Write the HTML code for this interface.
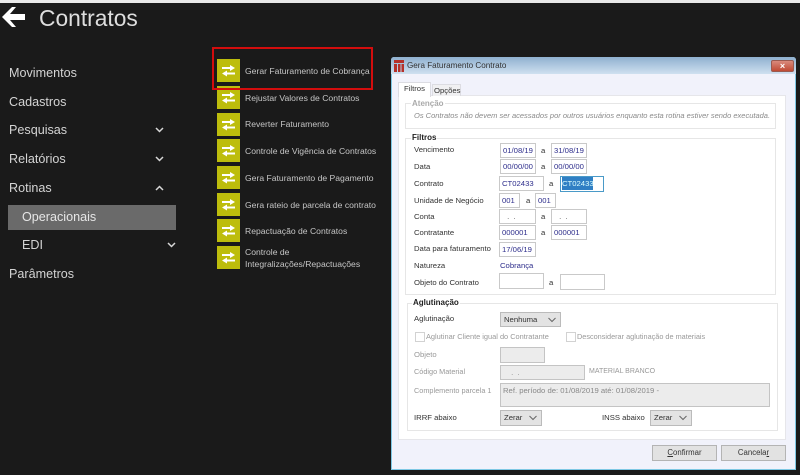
<!DOCTYPE html>
<html lang="pt">
<head>
<meta charset="utf-8">
<title>Contratos</title>
<style>
html,body{margin:0;padding:0;background:#1a1a1a}
#p{position:relative;width:800px;height:475px;overflow:hidden;background:#1a1a1a;font-family:"Liberation Sans",sans-serif}
#w{position:absolute;left:0;top:0;width:800px;height:475px;filter:blur(.35px)}
.t{position:absolute;white-space:nowrap;line-height:12px}
.n{color:#d4d4d4;font-size:12.6px;line-height:16px}
.m{color:#c6c6c6;font-size:8.6px;left:245px}
.i{position:absolute;left:217px;width:23px;height:23px;background:#bdbd0c}
.i svg{display:block}
.d{font-size:7.7px;color:#333}
.g{color:#999}
.v{color:#2e2e8c}
.f{position:absolute;box-sizing:border-box;background:#fff;border:1px solid #c9c9c9;color:#2e2e8c;font-size:7.7px;line-height:13px;padding-left:2px;white-space:nowrap;overflow:hidden}
.x{background:#ececec;color:#888;border-color:#c4c4c4}
.s{background:#e3e3e3;border-color:#bbb;color:#333;padding-left:3px}
.s svg{position:absolute;right:4px;top:4px}
.b{position:absolute;box-sizing:border-box;border:1px solid #b4b4b4;background:#e2e2e2;color:#333;font-size:7.8px;line-height:13px;text-align:center;top:445px;height:16px;width:65px}
.gb{position:absolute;box-sizing:border-box;border:1px solid #e6e6e6;background:#fff}
.lg{position:absolute;background:#fff;font-size:8px;font-weight:bold;line-height:10px;padding:0 1px;color:#222}
.c{position:absolute;box-sizing:border-box;width:10px;height:10px;border:1px solid #d2d2d2;background:#fff}
</style>
</head>
<body>
<div id="p"><div id="w">
<div style="position:absolute;left:0;top:0;width:800px;height:3px;background:#e9e9e9"></div>

<svg style="position:absolute;left:0;top:4px" width="28" height="24" viewBox="0 0 28 24"><path d="M2 13 L12 3 L16 3 L10 10 L25 10 L25 16 L10 16 L16 23 L12 23 Z" fill="#fff"/></svg>
<span class="t" style="left:39px;top:4px;font-size:22.8px;line-height:28px;color:#dedede">Contratos</span>

<span class="t n" style="left:9px;top:65px">Movimentos</span>
<span class="t n" style="left:9px;top:94px">Cadastros</span>
<span class="t n" style="left:9px;top:122px">Pesquisas</span>
<span class="t n" style="left:9px;top:151px">Relatórios</span>
<span class="t n" style="left:9px;top:180px">Rotinas</span>
<div style="position:absolute;left:8px;top:205px;width:168px;height:25px;background:#6a6a6a"></div>
<span class="t n" style="left:22px;top:209px;color:#e6e6e6">Operacionais</span>
<span class="t n" style="left:22px;top:237px">EDI</span>
<span class="t n" style="left:9px;top:266px">Parâmetros</span>

<svg style="position:absolute;left:155px;top:127px" width="9" height="6"><path d="M1 1 L4.500 4.500 L8 1" fill="none" stroke="#d8d8d8" stroke-width="1.500"/></svg>
<svg style="position:absolute;left:155px;top:156px" width="9" height="6"><path d="M1 1 L4.500 4.500 L8 1" fill="none" stroke="#d8d8d8" stroke-width="1.500"/></svg>
<svg style="position:absolute;left:155px;top:185px" width="9" height="6"><path d="M1 5 L4.500 1.500 L8 5" fill="none" stroke="#d8d8d8" stroke-width="1.500"/></svg>
<svg style="position:absolute;left:167px;top:242px" width="9" height="6"><path d="M1 1 L4.500 4.500 L8 1" fill="none" stroke="#d8d8d8" stroke-width="1.500"/></svg>

<div class="i" style="top:59px"><svg width="23" height="23"><path d="M5 8H13V6L18 9 13 12V10H5ZM18 13.500H10V11.500L5 14.500 10 17.500V15.500H18Z" fill="#fff"/></svg></div>
<div class="i" style="top:86px"><svg width="23" height="23"><path d="M5 8H13V6L18 9 13 12V10H5ZM18 13.500H10V11.500L5 14.500 10 17.500V15.500H18Z" fill="#fff"/></svg></div>
<div class="i" style="top:113px"><svg width="23" height="23"><path d="M5 8H13V6L18 9 13 12V10H5ZM18 13.500H10V11.500L5 14.500 10 17.500V15.500H18Z" fill="#fff"/></svg></div>
<div class="i" style="top:139px"><svg width="23" height="23"><path d="M5 8H13V6L18 9 13 12V10H5ZM18 13.500H10V11.500L5 14.500 10 17.500V15.500H18Z" fill="#fff"/></svg></div>
<div class="i" style="top:166px"><svg width="23" height="23"><path d="M5 8H13V6L18 9 13 12V10H5ZM18 13.500H10V11.500L5 14.500 10 17.500V15.500H18Z" fill="#fff"/></svg></div>
<div class="i" style="top:193px"><svg width="23" height="23"><path d="M5 8H13V6L18 9 13 12V10H5ZM18 13.500H10V11.500L5 14.500 10 17.500V15.500H18Z" fill="#fff"/></svg></div>
<div class="i" style="top:219px"><svg width="23" height="23"><path d="M5 8H13V6L18 9 13 12V10H5ZM18 13.500H10V11.500L5 14.500 10 17.500V15.500H18Z" fill="#fff"/></svg></div>
<div class="i" style="top:246px"><svg width="23" height="23"><path d="M5 8H13V6L18 9 13 12V10H5ZM18 13.500H10V11.500L5 14.500 10 17.500V15.500H18Z" fill="#fff"/></svg></div>

<span class="t m" style="top:65px">Gerar Faturamento de Cobrança</span>
<span class="t m" style="top:92px">Rejustar Valores de Contratos</span>
<span class="t m" style="top:118px">Reverter Faturamento</span>
<span class="t m" style="top:145px">Controle de Vigência de Contratos</span>
<span class="t m" style="top:172px">Gera Faturamento de Pagamento</span>
<span class="t m" style="top:199px">Gera rateio de parcela de contrato</span>
<span class="t m" style="top:225px">Repactuação de Contratos</span>
<span class="t m" style="top:246px">Controle de</span>
<span class="t m" style="top:258px">Integralizações/Repactuações</span>

<div style="position:absolute;left:212px;top:47px;width:161px;height:43px;box-sizing:border-box;border:2px solid #d30d0d"></div>

<!-- dialog -->
<div style="position:absolute;left:391px;top:57px;width:405px;height:413px;box-sizing:border-box;background:#f1f2fb;border:1px solid #7ec8e4;border-top:none;border-radius:3px 3px 0 0"></div>
<div style="position:absolute;left:391px;top:57px;width:405px;height:17px;background:linear-gradient(#8fb0cf,#cfe0f0);border-radius:3px 3px 0 0"></div>
<svg style="position:absolute;left:394px;top:60px" width="10" height="12"><path d="M0 0H10V3H0ZM0 4H3V12H0ZM4 4H6.500V12H4ZM7.500 4H10V12H7.500Z" fill="#b5302a"/></svg>
<span class="t" style="left:407px;top:60px;font-size:8.1px;color:#333">Gera Faturamento Contrato</span>
<div style="position:absolute;left:771px;top:60px;width:23px;height:12px;box-sizing:border-box;background:linear-gradient(#d98a7c,#c04a34);border:1px solid #9a5a50;border-radius:2px"></div>
<span class="t" style="left:771px;top:60px;width:23px;text-align:center;color:#fff;font-size:9px;font-weight:bold">×</span>

<div style="position:absolute;left:398px;top:95px;width:388px;height:345px;box-sizing:border-box;background:#fff;border:1px solid #e6e6ea"></div>
<div style="position:absolute;left:398px;top:82px;width:33px;height:15px;box-sizing:border-box;background:#fff;border:1px solid #dcdce2;border-bottom:none"></div>
<div style="position:absolute;left:432px;top:84px;width:29px;height:12px;box-sizing:border-box;background:#f0f0f2;border:1px solid #dcdce2;border-bottom:none"></div>
<span class="t d" style="left:404px;top:83px">Filtros</span>
<span class="t d" style="left:434px;top:85px">Opções</span>

<div class="gb" style="left:405px;top:103px;width:371px;height:26px"></div>
<span class="lg" style="left:411px;top:99px;color:#aaa">Atenção</span>
<span class="t d" style="left:414px;top:110px;color:#8a8a8a;font-style:italic;font-size:7.5px">Os Contratos não devem ser acessados por outros usuários enquanto esta rotina estiver sendo executada.</span>

<div class="gb" style="left:405px;top:138px;width:371px;height:157px"></div>
<span class="lg" style="left:411px;top:133px">Filtros</span>

<span class="t d" style="left:414px;top:144px">Vencimento</span>
<div class="f" style="left:500px;top:143px;width:36px;height:15px">01/08/19</div>
<span class="t d" style="left:541px;top:145px">a</span>
<div class="f" style="left:551px;top:143px;width:36px;height:15px">31/08/19</div>

<span class="t d" style="left:414px;top:161px">Data</span>
<div class="f" style="left:500px;top:159px;width:36px;height:15px">00/00/00</div>
<span class="t d" style="left:541px;top:161px">a</span>
<div class="f" style="left:551px;top:159px;width:36px;height:15px">00/00/00</div>

<span class="t d" style="left:414px;top:178px">Contrato</span>
<div class="f" style="left:499px;top:176px;width:45px;height:15px">CT02433</div>
<span class="t d" style="left:549px;top:178px">a</span>
<div class="f" style="left:560px;top:176px;width:44px;height:16px;border-color:#4a9ac8;color:#dff;padding-left:1px;line-height:13px"><span style="background:#2f7fc4;display:inline-block;width:31px;height:13px">CT02433</span></div>

<span class="t d" style="left:414px;top:195px">Unidade de Negócio</span>
<div class="f" style="left:499px;top:193px;width:21px;height:15px">001</div>
<span class="t d" style="left:526px;top:195px">a</span>
<div class="f" style="left:535px;top:193px;width:21px;height:15px">001</div>

<span class="t d" style="left:414px;top:211px">Conta</span>
<div class="f" style="left:499px;top:209px;width:37px;height:15px;padding-left:5px;color:#555">&nbsp;.&nbsp;&nbsp;.</div>
<span class="t d" style="left:541px;top:211px">a</span>
<div class="f" style="left:551px;top:209px;width:36px;height:15px;padding-left:5px;color:#555">&nbsp;.&nbsp;&nbsp;.</div>

<span class="t d" style="left:414px;top:227px">Contratante</span>
<div class="f" style="left:499px;top:225px;width:37px;height:15px">000001</div>
<span class="t d" style="left:541px;top:227px">a</span>
<div class="f" style="left:551px;top:225px;width:36px;height:15px">000001</div>

<span class="t d" style="left:414px;top:243px">Data para faturamento</span>
<div class="f" style="left:499px;top:242px;width:37px;height:15px">17/06/19</div>

<span class="t d" style="left:414px;top:260px">Natureza</span>
<span class="t d v" style="left:500px;top:260px">Cobrança</span>

<span class="t d" style="left:414px;top:277px">Objeto do Contrato</span>
<div class="f" style="left:499px;top:273px;width:45px;height:16px"></div>
<span class="t d" style="left:549px;top:277px">a</span>
<div class="f" style="left:560px;top:274px;width:45px;height:16px"></div>

<div class="gb" style="left:407px;top:303px;width:371px;height:128px"></div>
<span class="lg" style="left:412px;top:298px">Aglutinação</span>

<span class="t d" style="left:414px;top:313px">Aglutinação</span>
<div class="f s" style="left:500px;top:312px;width:61px;height:15px">Nenhuma<svg width="8" height="6"><path d="M0.500 1 L4 4.500 L7.500 1" fill="none" stroke="#666"/></svg></div>

<div class="c" style="left:415px;top:332px"></div>
<span class="t d g" style="left:426px;top:331px;font-size:7.4px">Aglutinar Cliente igual do Contratante</span>
<div class="c" style="left:566px;top:332px"></div>
<span class="t d g" style="left:577px;top:331px;font-size:7.3px">Desconsiderar aglutinação de materiais</span>

<span class="t d g" style="left:414px;top:349px">Objeto</span>
<div class="f x" style="left:500px;top:347px;width:45px;height:16px"></div>

<span class="t d g" style="left:414px;top:366px;font-size:7.3px">Código Material</span>
<div class="f x" style="left:500px;top:365px;width:85px;height:15px;padding-left:8px">&nbsp;.&nbsp;&nbsp;.</div>
<span class="t d g" style="left:589px;top:366px;font-size:7px">MATERIAL BRANCO</span>

<span class="t d g" style="left:414px;top:385px;font-size:7.3px">Complemento parcela 1</span>
<div class="f x" style="left:500px;top:383px;width:270px;height:24px">Ref. período de: 01/08/2019 até: 01/08/2019 -</div>

<span class="t d" style="left:414px;top:412px">IRRF abaixo</span>
<div class="f s" style="left:500px;top:410px;width:42px;height:16px">Zerar<svg width="8" height="6"><path d="M0.500 1 L4 4.500 L7.500 1" fill="none" stroke="#666"/></svg></div>
<span class="t d" style="left:602px;top:412px">INSS abaixo</span>
<div class="f s" style="left:650px;top:410px;width:42px;height:16px">Zerar<svg width="8" height="6"><path d="M0.500 1 L4 4.500 L7.500 1" fill="none" stroke="#666"/></svg></div>

<div class="b" style="left:652px"><u>C</u>onfirmar</div>
<div class="b" style="left:721px">Cancela<u>r</u></div>
</div></div>
</body>
</html>
